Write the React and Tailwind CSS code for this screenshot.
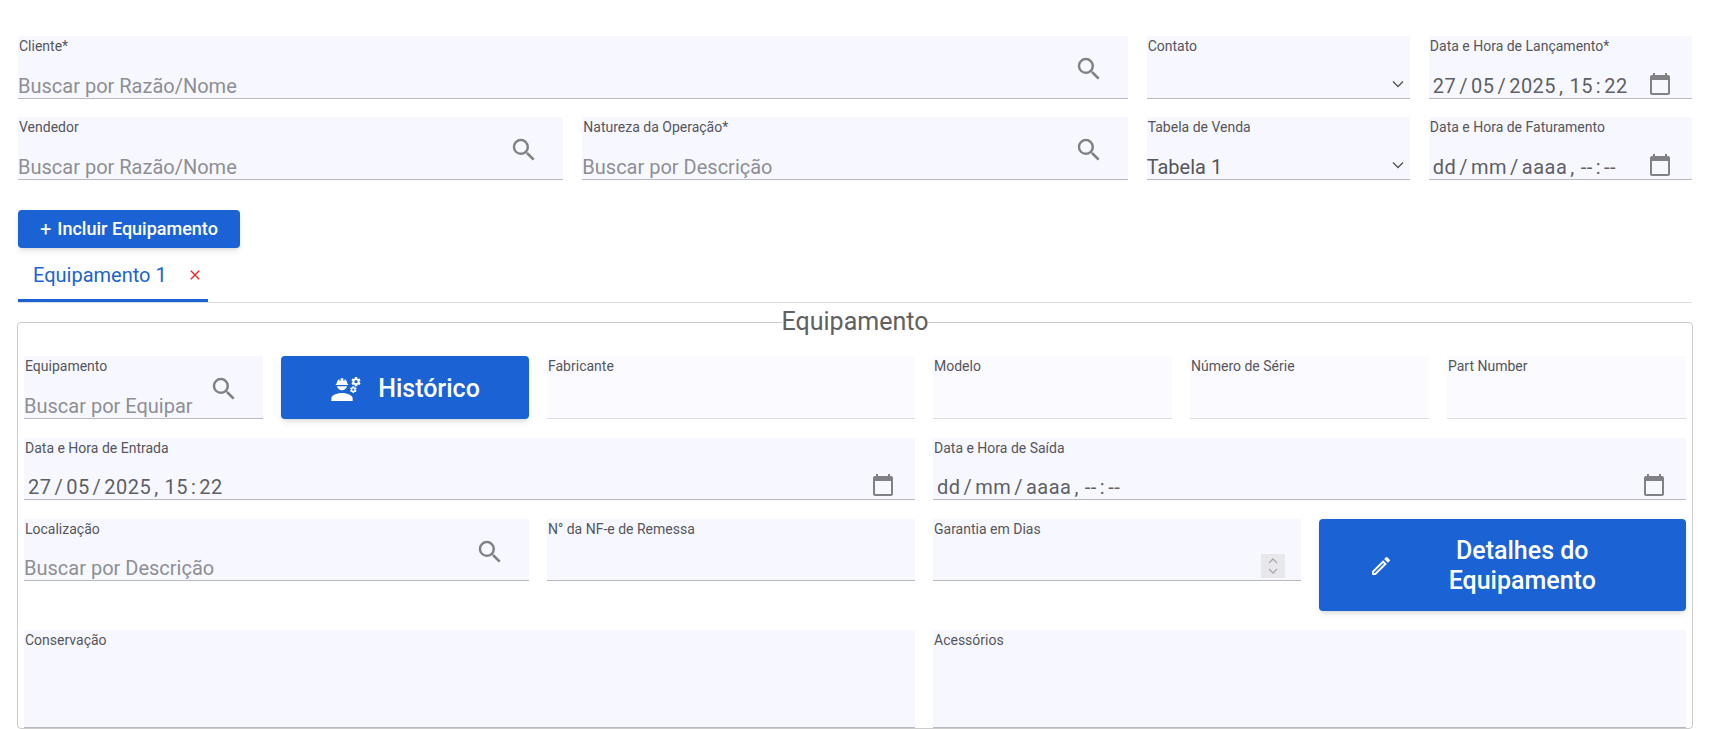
import React from "react";
import { MdEngineering, MdOutlineEdit, MdSearch, MdCalendarToday, MdClose } from "react-icons/md";

const Label = ({ children }) => (
  <span className="absolute left-px top-0 text-sm leading-5 font-normal text-[#55555c]">{children}</span>
);

const box = "relative bg-[#f7f8ff] border-b border-[#b9b9c0]";

function SearchField({ label, placeholder, short, className = "" }) {
  return (
    <div className={`${box} ${short ? "h-15.5" : "h-[63px]"} ${className}`}>
      <Label>{label}</Label>
      <span className="absolute left-0 bottom-0 text-xl leading-6 text-[#8e8e94] whitespace-nowrap">{placeholder}</span>
      <MdSearch className="absolute right-6 top-4.5 text-[#808085]" size={30} />
    </div>
  );
}

function TextField({ label, light, short, tall, children }) {
  const h = tall ? "h-24.5" : short ? "h-15.5" : "h-[63px]";
  return (
    <div className={`relative border-b ${h} ${light ? "bg-[#fbfbff] border-[#dcdce0]" : "bg-[#f7f8ff] border-[#b9b9c0]"}`}>
      <Label>{label}</Label>
      {children}
    </div>
  );
}

function SelectField({ label, value }) {
  return (
    <div className={`${box} h-[63px]`}>
      <Label>{label}</Label>
      {value && <span className="absolute left-0 bottom-0 text-xl leading-6 text-[#55555c]">{value}</span>}
      <svg className="absolute right-1.5 bottom-2 w-3 h-3 text-[#55555c]" viewBox="0 0 12 12" fill="none" stroke="currentColor" strokeWidth="1.4">
        <path d="M1 3.5 6 8.5 11 3.5" />
      </svg>
    </div>
  );
}

function DateField({ label, value, short }) {
  return (
    <div className={`${box} ${short ? "h-15.5" : "h-[63px]"}`}>
      <Label>{label}</Label>
      <span className="absolute left-1 bottom-0 text-xl leading-6 tracking-wide [word-spacing:-2.5px] text-[#5f5f66] whitespace-pre">{value}</span>
      <MdCalendarToday className="absolute right-5 bottom-0.5 text-[#808085]" size={24} />
    </div>
  );
}

export default function App() {
  const filled = "27 / 05 / 2025 ,  15 : 22";
  const empty = "dd / mm / aaaa ,  -- : --";
  return (
    <div className="h-screen overflow-hidden bg-white px-4.5 pt-9 font-['Roboto',sans-serif]">
      <div className="grid grid-cols-12 gap-x-4.75 gap-y-4.5">
        <SearchField className="col-span-8" label="Cliente*" placeholder="Buscar por Razão/Nome" />
        <div className="col-span-2"><SelectField label="Contato" /></div>
        <div className="col-span-2"><DateField label="Data e Hora de Lançamento*" value={filled} /></div>
        <SearchField className="col-span-4" label="Vendedor" placeholder="Buscar por Razão/Nome" />
        <SearchField className="col-span-4" label="Natureza da Operação*" placeholder="Buscar por Descrição" />
        <div className="col-span-2"><SelectField label="Tabela de Venda" value="Tabela 1" /></div>
        <div className="col-span-2"><DateField label="Data e Hora de Faturamento" value={empty} /></div>
      </div>

      <button className="mt-7.5 flex h-9.5 items-center rounded bg-[#1b63d4] px-5.5 text-lg font-medium text-white shadow-md">
        <span className="mr-1.5 text-xl font-normal">+</span>
        Incluir Equipamento
      </button>

      <div className="flex h-13.75 border-b border-[#dddddd]">
        <div className="flex w-[190px] items-center gap-5 border-b-[3px] border-[#1b63d4] pl-3.75 pt-0.5 text-xl text-[#1b63d4]">
          <span>Equipamento 1</span>
          <MdClose className="text-[#ee2222]" size={16} />
        </div>
      </div>

      <fieldset className="-mx-px mt-1.25 rounded border border-[#cccccc] px-1.5">
        <legend className="mx-auto text-[25px] leading-7 text-[#606060]">Equipamento</legend>
        <div className="mt-5 flex flex-col gap-4.75">
          <div className="grid grid-cols-[891px_1fr] gap-4.5">
            <div className="grid grid-cols-[239px_248px_1fr] gap-4.5">
              <SearchField label="Equipamento" placeholder="Buscar por Equipar" />
              <button className="flex items-center justify-center gap-4 rounded bg-[#1b63d4] pt-0.5 text-[25px] font-medium text-white shadow-md">
                <MdEngineering size={32} />
                Histórico
              </button>
              <TextField label="Fabricante" light />
            </div>
            <div className="grid grid-cols-3 gap-4.5">
              <TextField label="Modelo" light />
              <TextField label="Número de Série" light />
              <TextField label="Part Number" light />
            </div>
          </div>

          <div className="grid grid-cols-[891px_1fr] gap-4.5">
            <DateField short label="Data e Hora de Entrada" value={filled} />
            <DateField short label="Data e Hora de Saída" value={empty} />
          </div>

          <div className="grid grid-cols-[891px_1fr] gap-4.5">
            <div className="grid grid-cols-[505px_1fr] items-start gap-4.5">
              <SearchField short label="Localização" placeholder="Buscar por Descrição" />
              <TextField short label="N° da NF-e de Remessa" />
            </div>
            <div className="grid grid-cols-2 items-start gap-4.5">
              <TextField short label="Garantia em Dias">
                <div className="absolute right-4 bottom-0.5 flex h-6 w-6 items-center justify-center bg-[#e8e8ec]">
                  <svg className="h-5 w-3 text-[#a8a8b0]" viewBox="0 0 12 20" fill="none" stroke="currentColor" strokeWidth="1.3">
                    <path d="M2 7 6 3 10 7M2 13 6 17 10 13" />
                  </svg>
                </div>
              </TextField>
              <button className="flex h-23 items-center rounded bg-[#1b63d4] px-12 pt-0.5 text-[25px] leading-7.5 font-medium text-white shadow-md">
                <MdOutlineEdit size={24} className="ml-0.5 shrink-0" />
                <span className="ml-3.5 flex-1 text-center">Detalhes do Equipamento</span>
              </button>
            </div>
          </div>

          <div className="grid grid-cols-[891px_1fr] gap-4.5">
            <TextField label="Conservação" tall />
            <TextField label="Acessórios" tall />
          </div>
        </div>
      </fieldset>
    </div>
  );
}
